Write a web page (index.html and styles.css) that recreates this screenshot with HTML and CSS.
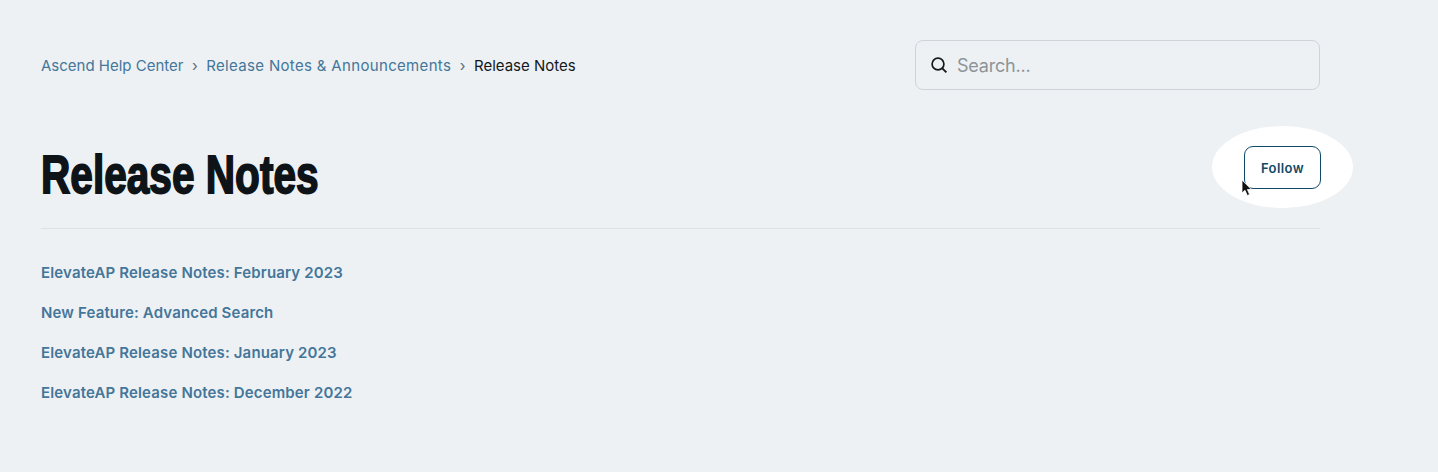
FILE: index.html
```html
<!DOCTYPE html>
<html lang="en">
<head>
<meta charset="utf-8">
<title>Release Notes</title>
<link rel="stylesheet" href="styles.css">
</head>
<body>
<main class="page">
  <div class="topbar">
    <nav class="crumbs">
      <a href="#">Ascend Help Center</a><span class="sep">›</span><a class="wide" href="#">Release Notes &amp; Announcements</a><span class="sep">›</span><span class="current">Release Notes</span>
    </nav>
    <div class="search">
      <svg class="search-icon" viewBox="0 0 18 18" width="18" height="18" aria-hidden="true"><circle cx="8" cy="8" r="5.9" fill="none" stroke="#15191c" stroke-width="1.7"/><path d="M12.3 12.3 16.4 16.4" fill="none" stroke="#15191c" stroke-width="1.9"/></svg>
      <span class="placeholder">Search...</span>
    </div>
  </div>
  <header class="head">
    <h1 class="title">Release Notes</h1>
    <div class="follow-wrap">
      <span class="spot"></span>
      <button class="follow">Follow</button>
      <svg class="cursor" viewBox="0 0 12 18" width="12" height="18" aria-hidden="true"><path d="M1 1V14L4 11.300L6.300 16.500L8.600 15.500L6.400 10.500H10.300Z" fill="#111" stroke="#fff" stroke-width="0.8"/></svg>
    </div>
  </header>
  <ul class="articles">
    <li><a href="#">ElevateAP Release Notes: February 2023</a></li>
    <li><a href="#">New Feature: Advanced Search</a></li>
    <li><a href="#">ElevateAP Release Notes: January 2023</a></li>
    <li><a href="#">ElevateAP Release Notes: December 2022</a></li>
  </ul>
</main>
</body>
</html>
```
FILE: styles.css
```css
* { box-sizing: border-box; }
html, body { margin: 0; height: 100%; }
body { background: #edf1f4; font-family: "Inter", "Liberation Sans", sans-serif; overflow: hidden; }
.page { width: 1279px; margin-left: 41px; padding-top: 40px; }
.topbar { display: flex; justify-content: space-between; align-items: center; height: 50px; }
.crumbs { font-size: 15px; letter-spacing: 0; display: flex; align-items: center; }
.crumbs a { color: #44769a; text-decoration: none; }
.crumbs .wide { letter-spacing: 0.33px; }
.sep { color: #5d6b76; margin: 0 8.5px; }
.current { color: #14181b; }
.search { width: 405px; height: 50px; border: 1px solid #ced4da; border-radius: 8px; display: flex; align-items: center; padding-left: 14px; gap: 9px; }
.search-icon { flex: none; }
.placeholder { color: #8e9498; font-size: 18px; letter-spacing: -0.2px; }
.head { position: relative; height: 139px; display: flex; justify-content: space-between; border-bottom: 1px solid #dde1e5; }
.title { margin: 0; padding-top: 57px; font-family: "Liberation Sans", sans-serif; font-size: 53px; line-height: 56px; font-weight: 700; color: #0d1317; -webkit-text-stroke: 1.8px #0d1317; transform: scaleX(0.766); transform-origin: left top; white-space: nowrap; }
.follow-wrap { position: absolute; right: -1px; top: 56px; width: 77px; height: 43px; }
.spot { position: absolute; left: -32px; top: -20px; width: 141px; height: 82px; border-radius: 50%; background: #fff; }
.follow { position: relative; width: 77px; height: 43px; border: 1px solid #0f4a68; border-radius: 9px; background: #fff; color: #0f4a68; font-family: "Inter", sans-serif; font-size: 13px; font-weight: 600; letter-spacing: 0.4px; padding: 0; }
.cursor { position: absolute; left: -3px; top: 33px; }
.articles { list-style: none; margin: 0; padding: 24px 0 0; }
.articles li { height: 40px; line-height: 40px; font-size: 15px; font-weight: 600; letter-spacing: 0.15px; }
.articles a { color: #44769a; text-decoration: none; }
```
